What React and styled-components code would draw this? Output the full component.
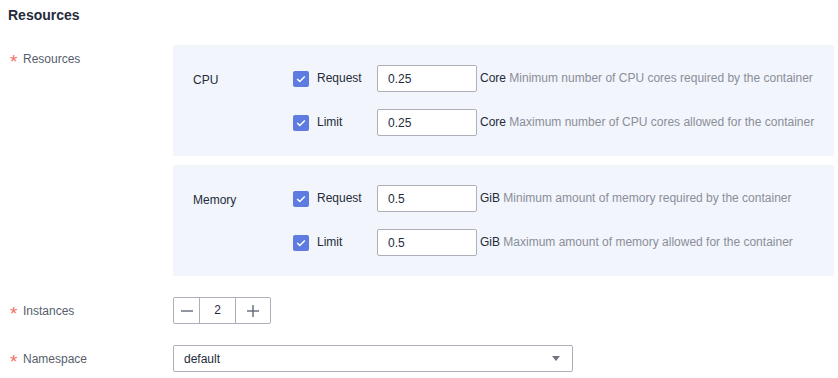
import React from "react";
import styled, { createGlobalStyle } from "styled-components";

const GlobalStyle = createGlobalStyle`
  html, body {
    margin: 0;
    padding: 0;
    background: #ffffff;
  }
  body {
    font-family: "Liberation Sans", Arial, sans-serif;
    font-size: 12px;
    color: #252b3a;
  }
`;

const groups = [
  {
    name: "CPU",
    unit: "Core",
    rows: [
      { label: "Request", value: "0.25", hint: "Minimum number of CPU cores required by the container" },
      { label: "Limit", value: "0.25", hint: "Maximum number of CPU cores allowed for the container" },
    ],
  },
  {
    name: "Memory",
    unit: "GiB",
    rows: [
      { label: "Request", value: "0.5", hint: "Minimum amount of memory required by the container" },
      { label: "Limit", value: "0.5", hint: "Maximum amount of memory allowed for the container" },
    ],
  },
];

export default function App() {
  return (
    <S.Page>
      <GlobalStyle />
      <S.Title>Resources</S.Title>

      <S.Item>
        <S.Label>
          <S.Star>*</S.Star>Resources
        </S.Label>
        <S.Panels>
          {groups.map((group) => (
            <S.Panel key={group.name}>
              <S.GroupName>{group.name}</S.GroupName>
              <S.Rows>
                {group.rows.map((row) => (
                  <S.Row key={row.label}>
                    <S.Check>
                      <S.Box>
                        <svg width="10" height="8" viewBox="0 0 10 8">
                          <polyline
                            points="1.2,4 3.8,6.5 8.8,1.5"
                            fill="none"
                            stroke="#fff"
                            strokeWidth="1.6"
                          />
                        </svg>
                      </S.Box>
                      <S.CheckText>{row.label}</S.CheckText>
                    </S.Check>
                    <S.Input defaultValue={row.value} />
                    <S.Unit>
                      {group.unit} <S.Hint>{row.hint}</S.Hint>
                    </S.Unit>
                  </S.Row>
                ))}
              </S.Rows>
            </S.Panel>
          ))}
        </S.Panels>
      </S.Item>

      <S.Item>
        <S.Label>
          <S.Star>*</S.Star>Instances
        </S.Label>
        <S.Stepper>
          <S.StepButton>
            <svg width="12" height="12" viewBox="0 0 12 12">
              <line x1="0" y1="6" x2="12" y2="6" stroke="#575d6c" strokeWidth="1.3" />
            </svg>
          </S.StepButton>
          <S.StepValue>2</S.StepValue>
          <S.StepButton $last>
            <svg width="12" height="12" viewBox="0 0 12 12">
              <line x1="0" y1="6" x2="12" y2="6" stroke="#575d6c" strokeWidth="1.3" />
              <line x1="6" y1="0" x2="6" y2="12" stroke="#575d6c" strokeWidth="1.3" />
            </svg>
          </S.StepButton>
        </S.Stepper>
      </S.Item>

      <S.Item>
        <S.Label>
          <S.Star>*</S.Star>Namespace
        </S.Label>
        <S.Select>
          <span>default</span>
          <svg width="8" height="5" viewBox="0 0 8 5">
            <polygon points="0,0 8,0 4,5" fill="#71757f" />
          </svg>
        </S.Select>
      </S.Item>
    </S.Page>
  );
}

const S = {
  Page: styled.div`
    padding: 5px 4px 0 8px;
  `,
  Title: styled.h3`
    margin: 0 0 20px;
    font-size: 14px;
    line-height: 20px;
    font-weight: 700;
    color: #252b3a;
  `,
  Item: styled.div`
    display: grid;
    grid-template-columns: 165px 1fr;
    align-items: start;
    margin-bottom: 21px;
  `,
  Label: styled.div`
    display: flex;
    align-items: center;
    box-sizing: border-box;
    padding: 1px 0 0 2px;
    height: 27px;
    font-size: 12px;
    color: #575d6c;
  `,
  Star: styled.span`
    display: inline-block;
    width: 13px;
    height: 12px;
    color: #f66f6a;
    font-size: 19px;
    line-height: 17px;
  `,
  Panels: styled.div`
    display: flex;
    flex-direction: column;
    gap: 9px;
  `,
  Panel: styled.div`
    display: grid;
    grid-template-columns: 100px 1fr;
    padding: 20px;
    background: #f2f5fc;
    border-radius: 2px;
  `,
  GroupName: styled.div`
    padding-top: 2px;
    line-height: 27px;
    color: #252b3a;
  `,
  Rows: styled.div`
    display: flex;
    flex-direction: column;
    gap: 17px;
  `,
  Row: styled.div`
    display: flex;
    align-items: center;
    height: 27px;
  `,
  Check: styled.label`
    display: flex;
    align-items: center;
    width: 84px;
  `,
  Box: styled.span`
    display: flex;
    align-items: center;
    justify-content: center;
    width: 16px;
    height: 16px;
    border-radius: 2px;
    background: #5e7ce0;
  `,
  CheckText: styled.span`
    margin-left: 8px;
    margin-top: -2px;
    color: #252b3a;
  `,
  Input: styled.input`
    box-sizing: border-box;
    width: 100px;
    height: 27px;
    padding: 0 10px;
    border: 1px solid #adb0b8;
    border-radius: 2px;
    background: #fff;
    font-family: inherit;
    font-size: 12px;
    color: #252b3a;
    outline: none;
  `,
  Unit: styled.span`
    margin-left: 3px;
    margin-top: -1px;
    color: #252b3a;
    white-space: nowrap;
  `,
  Hint: styled.span`
    color: #8a8e99;
  `,
  Stepper: styled.div`
    display: flex;
    width: fit-content;
    height: 27px;
    box-sizing: border-box;
    border: 1px solid #adb0b8;
    border-radius: 2px;
    background: #fff;
  `,
  StepButton: styled.div`
    display: flex;
    align-items: center;
    justify-content: center;
    width: ${(p) => (p.$last ? "34px" : "25px")};
    border-right: ${(p) => (p.$last ? "none" : "1px solid #adb0b8")};
  `,
  StepValue: styled.div`
    width: 35px;
    border-right: 1px solid #adb0b8;
    text-align: center;
    line-height: 25px;
    color: #252b3a;
  `,
  Select: styled.div`
    display: flex;
    align-items: center;
    justify-content: space-between;
    box-sizing: border-box;
    width: 400px;
    height: 27px;
    padding: 0 12px 0 10px;
    border: 1px solid #adb0b8;
    border-radius: 2px;
    background: #fff;
    color: #252b3a;
  `,
};
